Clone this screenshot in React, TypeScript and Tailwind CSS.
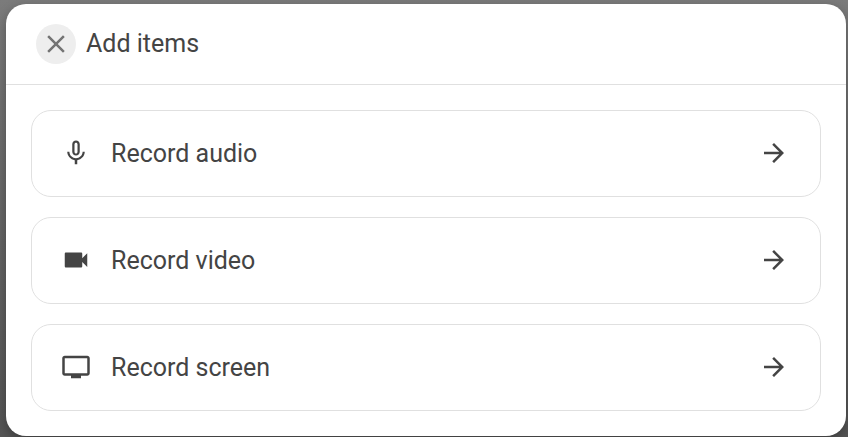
import { MdArrowForward, MdClose, MdMicNone, MdTv, MdVideocam } from "react-icons/md";

const options = [
  { label: "Record audio", icon: MdMicNone },
  { label: "Record video", icon: MdVideocam },
  { label: "Record screen", icon: MdTv },
];

export default function App() {
  return (
    <div className="min-h-screen bg-linear-to-b from-[#7b7b7b] via-[#666666] to-[#555555] pt-1 pr-0.5 pb-px pl-1.5 font-['Roboto',sans-serif] text-[#444444]">
      <div
        role="dialog"
        aria-labelledby="dialog-title"
        className="overflow-hidden rounded-[20px] bg-white shadow-[0_4px_12px_rgba(0,0,0,0.3)]"
      >
        <header className="flex items-center gap-2.5 border-b border-[#e0e0e0] px-[30px] py-5">
          <button
            type="button"
            aria-label="Close"
            className="flex size-10 items-center justify-center rounded-full bg-[#eeeeee] text-[#757575]"
          >
            <MdClose size={30} />
          </button>
          <h1 id="dialog-title" className="text-[25px] leading-10">Add items</h1>
        </header>

        <div className="flex flex-col gap-5 p-[25px]">
          {options.map(({ label, icon: Icon }) => (
            <button
              key={label}
              type="button"
              className="flex w-full items-center gap-5 rounded-[20px] border border-[#e0e0e0] pt-[23px] pr-[31px] pb-6 pl-[29px] text-left"
            >
              <Icon size={30} className="shrink-0" />
              <span className="flex-1 pt-0.5 text-[25px] leading-9">{label}</span>
              <MdArrowForward size={30} className="shrink-0" />
            </button>
          ))}
        </div>
      </div>
    </div>
  );
}
